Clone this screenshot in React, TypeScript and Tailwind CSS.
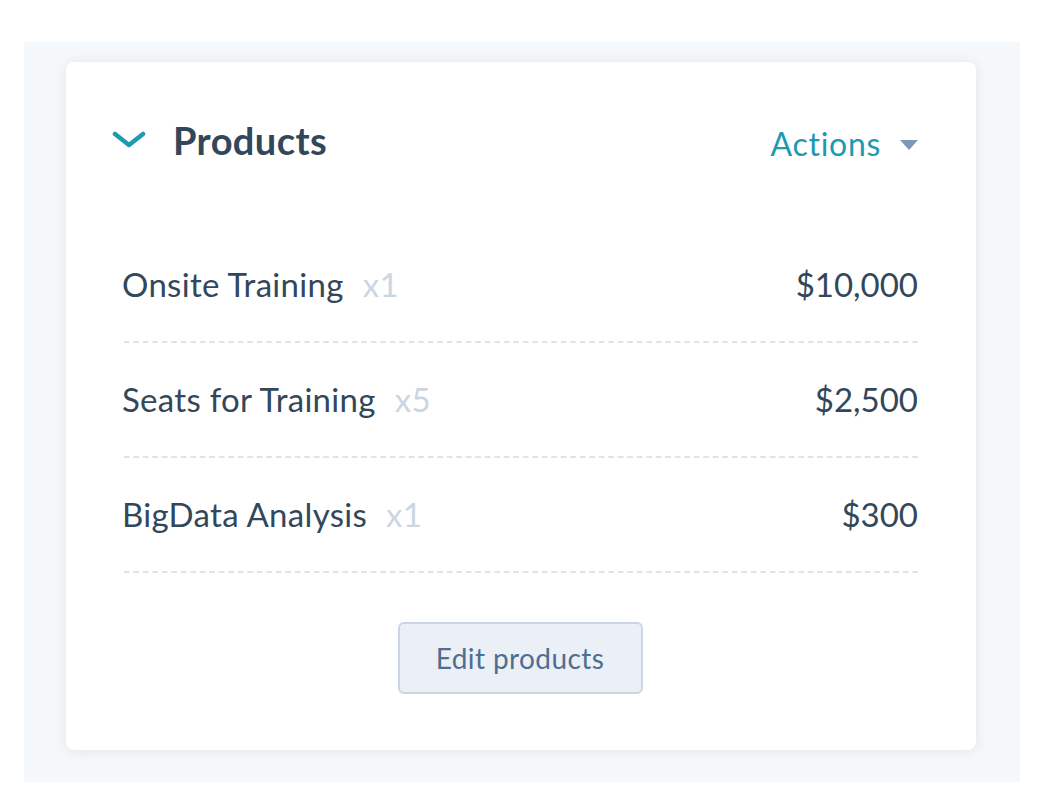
const products = [
  { name: 'Onsite Training', qty: 1, price: '$10,000' },
  { name: 'Seats for Training', qty: 5, price: '$2,500' },
  { name: 'BigData Analysis', qty: 1, price: '$300' },
]

function Chevron() {
  return (
    <svg width="34" height="20" viewBox="0 0 34 20" fill="none">
      <path
        d="M3 4 L17 15 L31 4"
        stroke="#1d9bb2"
        strokeWidth="4.5"
        strokeLinecap="round"
        strokeLinejoin="round"
      />
    </svg>
  )
}

function Caret() {
  return (
    <svg width="18" height="10" viewBox="0 0 18 10">
      <path d="M0 0 H18 L9 10 Z" fill="#7c98b6" />
    </svg>
  )
}

export default function App() {
  return (
    <div className="min-h-[806px] w-[1038px] bg-white pt-[42px] pl-[24px] font-['Lato',sans-serif]">
      <div className="h-[740px] w-[996px] bg-[#f5f8fa] pt-[20px] pl-[42px]">
        <div className="h-[688px] w-[910px] rounded-[8px] bg-white shadow-[0_1px_12px_rgba(45,62,80,0.10)] pl-[56px] pr-[58px]">
          <div className="flex h-[166px] items-center justify-between pb-[10px]">
            <div className="flex items-center">
              <div className="-ml-[10px] mr-[27px]">
                <Chevron />
              </div>
              <span className="text-[38px] font-bold leading-none tracking-[0.4px] text-[#33475b]">
                Products
              </span>
            </div>
            <div className="flex items-center pt-[8px]">
              <span className="text-[32px] leading-none tracking-[0.7px] text-[#1e9ab0]">
                Actions
              </span>
              <span className="ml-[19px] mt-[2px]">
                <Caret />
              </span>
            </div>
          </div>

          {products.map((p) => (
            <div key={p.name}>
              <div className="flex h-[113px] items-center justify-between text-[33px] leading-none text-[#33475b]">
                <div className="tracking-[0.3px]">
                  {p.name}
                  <span className="ml-[19px] text-[#cbd6e2]">x{p.qty}</span>
                </div>
                <div>{p.price}</div>
              </div>
              <div className="h-[2px] bg-[linear-gradient(90deg,transparent_3.5px,#dfe3eb_3.5px)] bg-[length:9.5px_2px] bg-repeat-x bg-right" />
            </div>
          ))}

          <div className="flex justify-center pt-[49px]">
            <button
              type="button"
              className="h-[72px] w-[245px] rounded-[6px] border-2 border-[#cbd6e2] bg-[#eaf0f6] text-[28px] tracking-[0.4px] text-[#506e91]"
            >
              Edit products
            </button>
          </div>
        </div>
      </div>
    </div>
  )
}
